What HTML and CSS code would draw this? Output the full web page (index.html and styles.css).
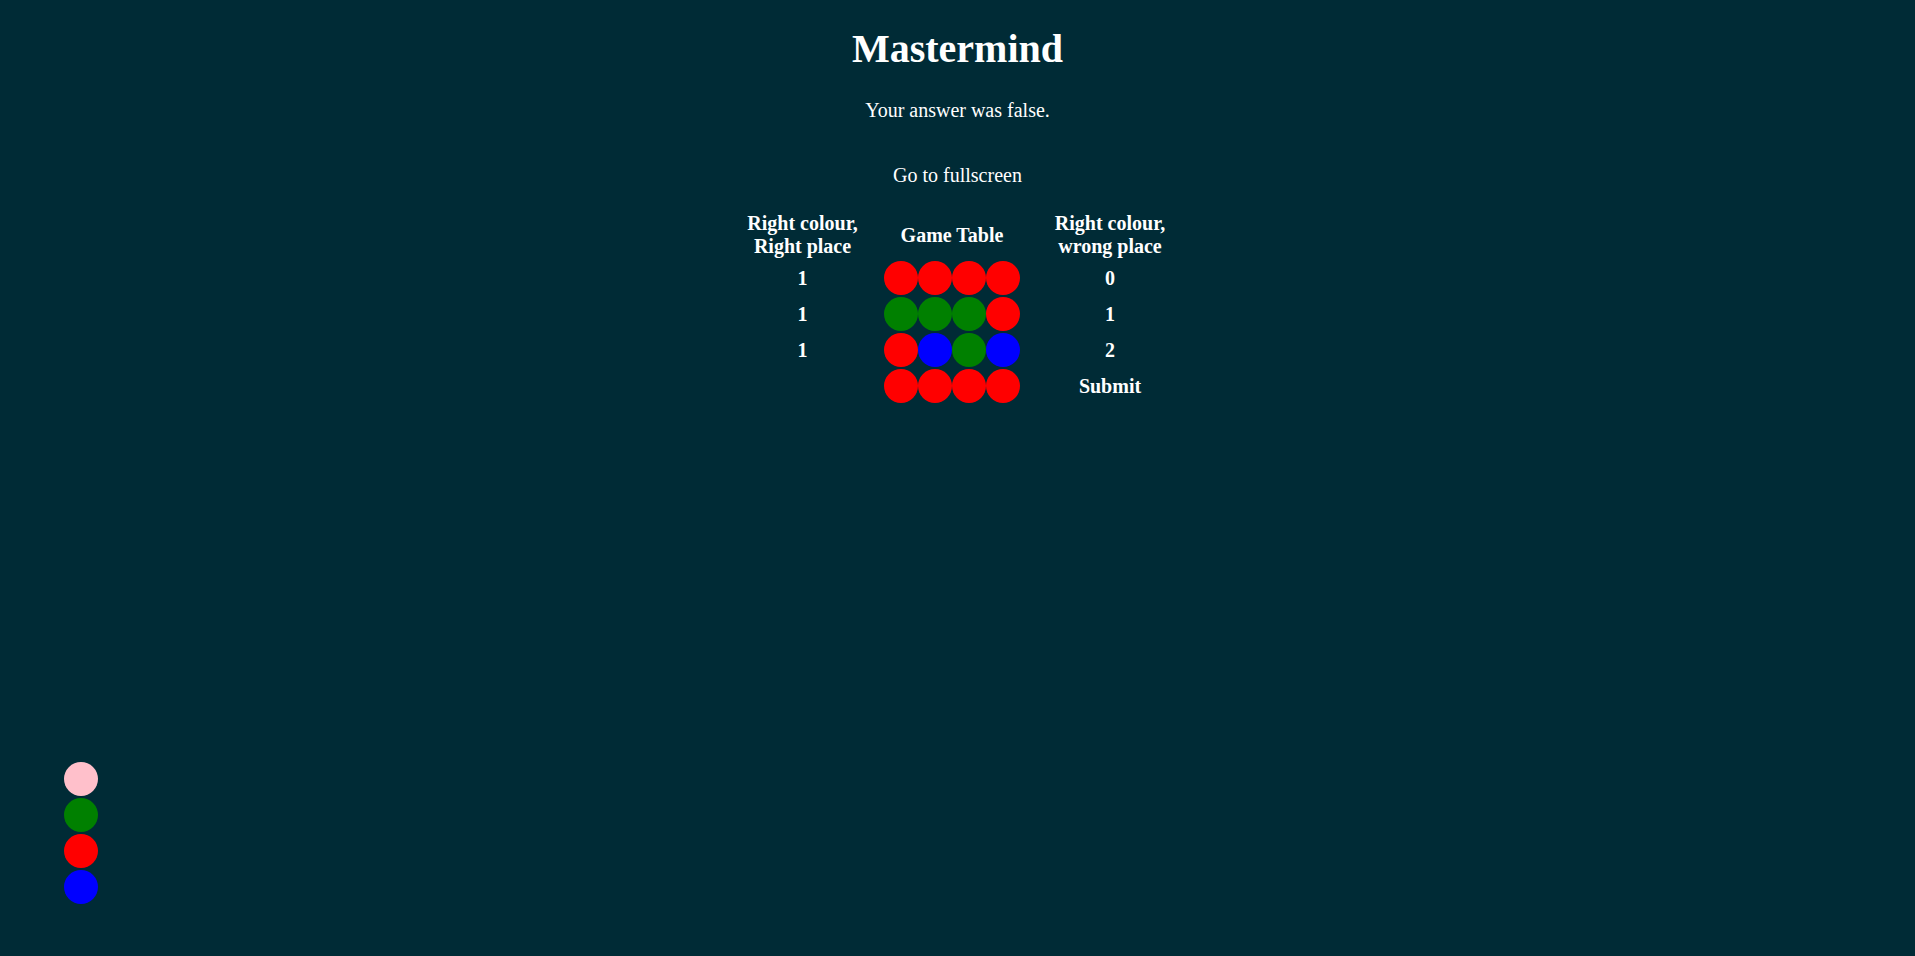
FILE: index.html
```html
<!DOCTYPE html>
<html lang="en">
<head>
<meta charset="utf-8">
<title>Mastermind</title>
<link rel="stylesheet" href="styles.css">
</head>
<body>
<h1 class="title">Mastermind</h1>
<p class="status">Your answer was false.</p>
<p class="fullscreen">Go to fullscreen</p>
<table class="board">
  <thead>
    <tr>
      <th class="col-left">Right colour,<br>Right place</th>
      <th class="col-mid">Game Table</th>
      <th class="col-right">Right colour,<br>wrong place</th>
    </tr>
  </thead>
  <tbody>
    <tr>
      <th class="col-left">1</th>
      <td class="col-mid"><div class="pegs"><span class="peg red"></span><span class="peg red"></span><span class="peg red"></span><span class="peg red"></span></div></td>
      <th class="col-right">0</th>
    </tr>
    <tr>
      <th class="col-left">1</th>
      <td class="col-mid"><div class="pegs"><span class="peg green"></span><span class="peg green"></span><span class="peg green"></span><span class="peg red"></span></div></td>
      <th class="col-right">1</th>
    </tr>
    <tr>
      <th class="col-left">1</th>
      <td class="col-mid"><div class="pegs"><span class="peg red"></span><span class="peg blue"></span><span class="peg green"></span><span class="peg blue"></span></div></td>
      <th class="col-right">2</th>
    </tr>
    <tr>
      <th class="col-left"></th>
      <td class="col-mid"><div class="pegs"><span class="peg red"></span><span class="peg red"></span><span class="peg red"></span><span class="peg red"></span></div></td>
      <th class="col-right"><button class="submit" type="button">Submit</button></th>
    </tr>
  </tbody>
</table>
<div class="palette">
  <span class="peg pink"></span>
  <span class="peg green"></span>
  <span class="peg red"></span>
  <span class="peg blue"></span>
</div>
</body>
</html>
```

FILE: styles.css
```css
html {
  background: #002b36;
}
body {
  margin: 0 8px 8px;
  background: #002b36;
  color: #ffffff;
  font-family: "Liberation Serif", "Times New Roman", serif;
  font-size: 20px;
  text-align: center;
}
.title {
  font-size: 40px;
  font-weight: bold;
  margin: 25px 0 27px;
}
.status {
  margin: 0;
}
.fullscreen {
  margin: 42px 0 23px;
}
.board {
  margin: 0 auto;
  border-spacing: 2px;
}
.board th,
.board td {
  padding: 0;
  vertical-align: middle;
  font-weight: bold;
}
.board thead th {
  padding-bottom: 1px;
}
.board .col-left {
  width: 159px;
}
.board .col-mid {
  width: 136px;
}
.board .col-right {
  width: 164px;
  padding-left: 6px;
}
.pegs {
  display: flex;
}
.peg {
  display: block;
  width: 34px;
  height: 34px;
  border-radius: 50%;
}
.red { background: #ff0000; }
.green { background: #008000; }
.blue { background: #0000ff; }
.pink { background: #ffc0cb; }
.submit {
  font: inherit;
  font-weight: bold;
  color: inherit;
  background: none;
  border: none;
  padding: 0;
  margin: 0;
  cursor: pointer;
}
.palette {
  position: fixed;
  left: 64px;
  bottom: 52px;
  display: flex;
  flex-direction: column;
  gap: 2px;
}
```
